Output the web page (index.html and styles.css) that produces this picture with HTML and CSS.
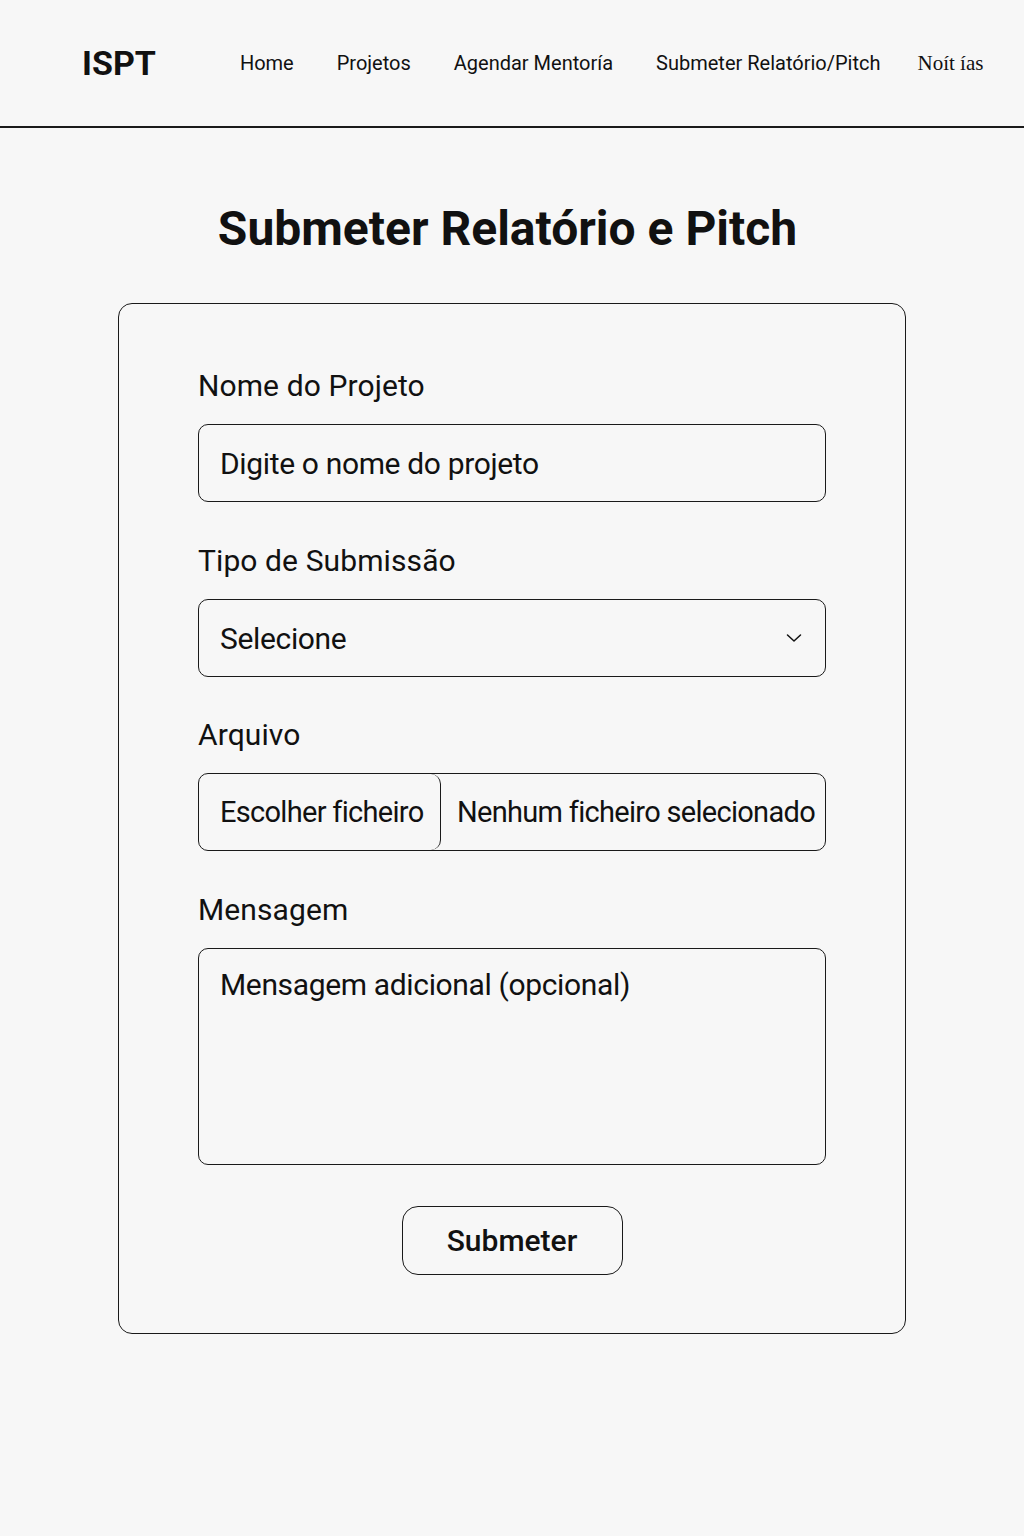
FILE: index.html
```html
<!DOCTYPE html>
<html lang="pt">
<head>
  <meta charset="UTF-8">
  <title>Submeter Relatório e Pitch – ISPT</title>
  <link rel="stylesheet" href="styles.css">
</head>
<body>

<header class="topbar">
  <div class="logo">ISPT</div>
  <nav class="nav">
    <a href="#">Home</a>
    <a href="#">Projetos</a>
    <a href="#">Agendar Mentoría</a>
    <a href="#">Submeter Relatório/Pitch</a>
    <a href="#" class="serif">Noít ías</a>
  </nav>
</header>

<main class="page">
  <h1 class="title">Submeter Relatório e Pitch</h1>

  <form class="card">
    <div class="field">
      <label class="field-label">Nome do Projeto</label>
      <div class="box">Digite o nome do projeto</div>
    </div>

    <div class="field tight">
      <label class="field-label">Tipo de Submissão</label>
      <div class="box select">
        <span>Selecione</span>
        <svg class="chevron" width="20" height="12" viewBox="0 0 20 12">
          <path d="M3.5 3 L10 9 L16.5 3" fill="none" stroke="#111" stroke-width="1.5" stroke-linecap="round" stroke-linejoin="round"/>
        </svg>
      </div>
    </div>

    <div class="field">
      <label class="field-label">Arquivo</label>
      <div class="box file">
        <span class="file-btn">Escolher ficheiro</span>
        <span class="file-name">Nenhum ficheiro selecionado</span>
      </div>
    </div>

    <div class="field">
      <label class="field-label">Mensagem</label>
      <div class="box textarea">Mensagem adicional (opcional)</div>
    </div>

    <div class="actions">
      <button type="button" class="submit">Submeter</button>
    </div>
  </form>
</main>

</body>
</html>
```

FILE: styles.css
```css
body {
  margin: 0;
  background: #f7f7f7;
  color: #111;
  font-family: Roboto, "Liberation Sans", Arial, sans-serif;
}
.topbar {
  display: flex;
  align-items: center;
  height: 126px;
  padding-left: 82px;
  border-bottom: 2px solid #1a1a1a;
}
.logo {
  font-size: 34px;
  font-weight: 700;
}
.nav {
  display: flex;
  gap: 43px;
  margin-left: 84px;
}
.nav a {
  color: #111;
  text-decoration: none;
  font-size: 20px;
}
.nav a.serif {
  font-family: "Liberation Serif", "Times New Roman", serif;
  font-size: 21px;
  margin-left: -6px;
}
.page {
  display: flex;
  flex-direction: column;
  align-items: center;
  padding-bottom: 120px;
}
.title {
  margin: 73px 9px 46px 0;
  font-size: 48px;
  line-height: 56px;
  font-weight: 700;
}
.card {
  width: 628px;
  padding: 64px 79px 58px;
  border: 1.5px solid #1a1a1a;
  border-radius: 14px;
}
.field {
  display: flex;
  flex-direction: column;
  gap: 20px;
  margin-bottom: 41px;
}
.field.tight {
  margin-bottom: 40px;
}
.field-label {
  font-size: 30px;
  line-height: 36px;
  letter-spacing: 0.1px;
}
.box {
  box-sizing: border-box;
  height: 78px;
  padding: 0 21px;
  display: flex;
  align-items: center;
  border: 1.5px solid #1a1a1a;
  border-radius: 10px;
  font-size: 30px;
  letter-spacing: -0.35px;
}
.select {
  justify-content: space-between;
  padding-right: 21px;
}
.file {
  padding: 0;
  overflow: hidden;
  font-size: 29px;
  letter-spacing: -0.7px;
}
.file-btn {
  box-sizing: border-box;
  height: 100%;
  display: flex;
  align-items: center;
  padding: 0 6px 0 21px;
  border-right: 1.5px solid #1a1a1a;
  border-radius: 0 10px 10px 0;
  width: 242px;
  white-space: nowrap;
}
.file-name {
  padding-left: 16px;
  white-space: nowrap;
}
.textarea {
  height: 217px;
  align-items: flex-start;
  padding-top: 18px;
}
.actions {
  display: flex;
  justify-content: center;
  margin-top: 1px;
}
.submit {
  width: 221px;
  height: 69px;
  background: transparent;
  border: 1.5px solid #1a1a1a;
  border-radius: 16px;
  font-family: Roboto, "Liberation Sans", Arial, sans-serif;
  font-size: 30px;
  font-weight: 500;
  color: #111;
  cursor: pointer;
}
```
